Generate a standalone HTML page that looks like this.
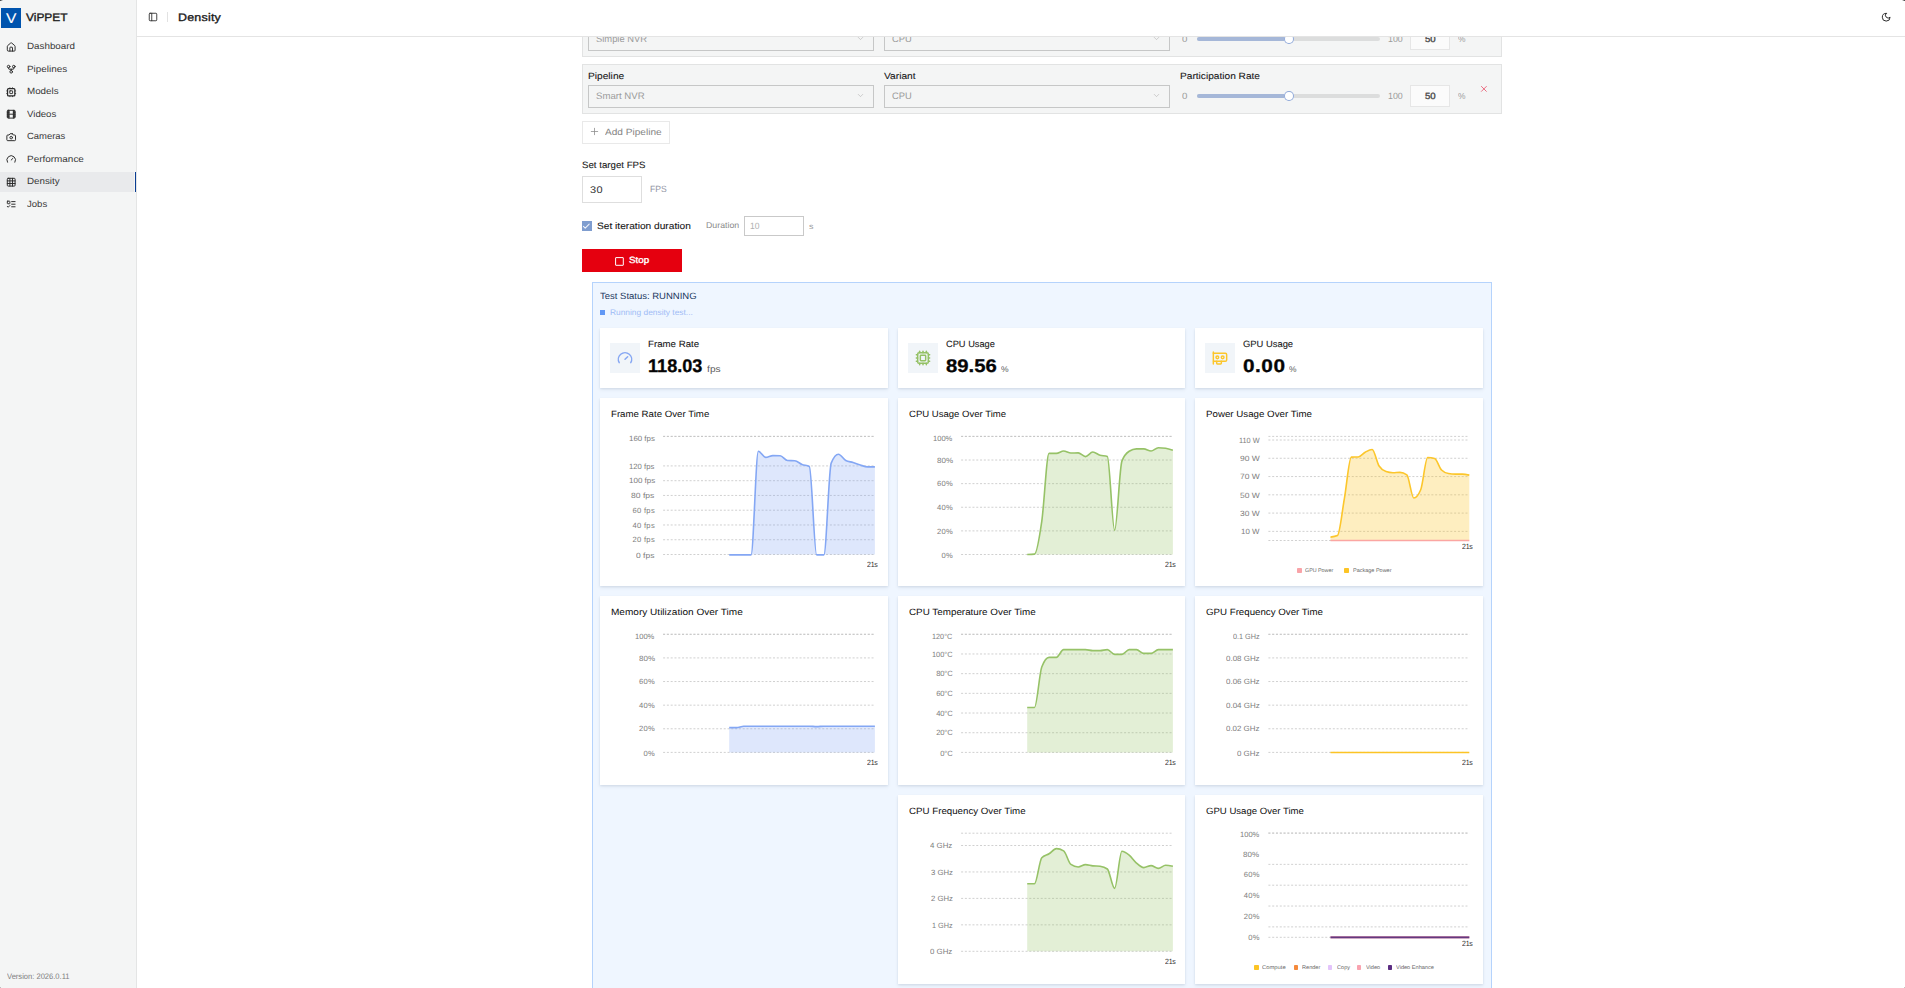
<!DOCTYPE html>
<html lang="en"><head><meta charset="utf-8"><title>ViPPET - Density</title><style>
html,body{margin:0;padding:0;background:#fff;}
body{width:1905px;height:988px;overflow:hidden;position:relative;font-family:"Liberation Sans",sans-serif;}
.b{position:absolute;box-sizing:border-box;}
.t{position:absolute;white-space:pre;line-height:1;transform-origin:0 0;text-rendering:geometricPrecision;font-family:"Liberation Sans",sans-serif;}
.i{position:absolute;overflow:visible;}
.c{position:absolute;overflow:visible;}
.c text{font-family:"Liberation Sans",sans-serif;}
</style></head><body>
<div class="b" style="left:0.00px;top:0.00px;width:136.00px;height:988.00px;background:#f4f5f5;z-index:20;"></div>
<div class="b" style="left:136.00px;top:0.00px;width:1.00px;height:988.00px;background:#e4e5e5;z-index:20;"></div>
<div class="b" style="left:1.00px;top:8.00px;width:20.00px;height:20.00px;background:#0054ae;z-index:21;"></div>
<span class="t" style="transform:scaleX(1.0983);left:5.70px;top:11px;line-height:16px;font-size:14.2px;color:#fff;-webkit-text-stroke:0.09px #fff;z-index:22;">V</span>
<span class="t" style="transform:scaleX(1.0858);left:26.10px;top:12px;line-height:12px;font-size:11px;color:#1a1a1a;-webkit-text-stroke:0.35px #1a1a1a;z-index:22;">ViPPET</span>
<div class="b" style="left:0.00px;top:172.00px;width:134.00px;height:20.00px;background:#e9eaec;z-index:21;"></div>
<div class="b" style="left:135.00px;top:172.00px;width:1.20px;height:20.00px;background:#0a3d92;z-index:21;"></div>
<svg class="i" style="left:5.75px;top:41.80px;color:#2a2a2a;z-index:22;" width="10.4" height="10.4" viewBox="0 0 24 24" fill="none" stroke="#2a2a2a" stroke-width="2.25" stroke-linecap="round" stroke-linejoin="round"><path d="M15 21v-8a1 1 0 0 0-1-1h-4a1 1 0 0 0-1 1v8"/><path d="M3 10a2 2 0 0 1 .709-1.528l7-5.999a2 2 0 0 1 2.582 0l7 5.999A2 2 0 0 1 21 10v9a2 2 0 0 1-2 2H5a2 2 0 0 1-2-2z"/></svg>
<span class="t" style="transform:scaleX(1.0901);left:26.60px;top:41px;line-height:10px;font-size:9.0px;color:#383838;z-index:22;">Dashboard</span>
<svg class="i" style="left:5.75px;top:64.30px;color:#2a2a2a;z-index:22;" width="10.4" height="10.4" viewBox="0 0 24 24" fill="none" stroke="#2a2a2a" stroke-width="2.25" stroke-linecap="round" stroke-linejoin="round"><circle cx="12" cy="18" r="3"/><circle cx="6" cy="6" r="3"/><circle cx="18" cy="6" r="3"/><path d="M18 9v2c0 .6-.4 1-1 1H7c-.6 0-1-.4-1-1V9"/><path d="M12 12v3"/></svg>
<span class="t" style="transform:scaleX(1.1004);left:26.60px;top:64px;line-height:10px;font-size:9.0px;color:#383838;z-index:22;">Pipelines</span>
<svg class="i" style="left:5.75px;top:86.80px;color:#2a2a2a;z-index:22;" width="10.4" height="10.4" viewBox="0 0 24 24" fill="none" stroke="#2a2a2a" stroke-width="2.25" stroke-linecap="round" stroke-linejoin="round"><rect width="16.8" height="16.8" x="3.6" y="3.6" rx="2.2" stroke-width="2.9"/><rect width="6.4" height="6.4" x="8.8" y="8.8" rx=".6" stroke-width="2.1"/><path d="M15 1.6v1M15 21.4v1M1.6 15h1M1.6 9h1M21.4 15h1M21.4 9h1M9 1.6v1M9 21.4v1" stroke-width="1.8"/></svg>
<span class="t" style="transform:scaleX(1.0891);left:26.60px;top:86px;line-height:10px;font-size:9.0px;color:#383838;z-index:22;">Models</span>
<svg class="i" style="left:5.75px;top:109.30px;color:#2a2a2a;z-index:22;" width="10.4" height="10.4" viewBox="0 0 24 24" fill="none" stroke="#2a2a2a" stroke-width="2.25" stroke-linecap="round" stroke-linejoin="round"><path d="M5 3h2v18H5a2 2 0 0 1-2-2V5a2 2 0 0 1 2-2zM19 3h-2v18h2a2 2 0 0 0 2-2V5a2 2 0 0 0-2-2z" fill="currentColor" fill-opacity=".75" stroke="none"/><rect width="18" height="18" x="3" y="3" rx="2"/><path d="M7 3v18"/><path d="M3 7.5h4"/><path d="M3 12h18"/><path d="M3 16.5h4"/><path d="M17 3v18"/><path d="M17 7.5h4"/><path d="M17 16.5h4"/></svg>
<span class="t" style="transform:scaleX(1.0709);left:26.60px;top:109px;line-height:10px;font-size:9.0px;color:#383838;z-index:22;">Videos</span>
<svg class="i" style="left:5.75px;top:131.80px;color:#2a2a2a;z-index:22;" width="10.4" height="10.4" viewBox="0 0 24 24" fill="none" stroke="#2a2a2a" stroke-width="2.25" stroke-linecap="round" stroke-linejoin="round"><path d="M14.5 4h-5L7 7H4a2 2 0 0 0-2 2v9a2 2 0 0 0 2 2h16a2 2 0 0 0 2-2V9a2 2 0 0 0-2-2h-3l-2.5-3z"/><circle cx="12" cy="13" r="3"/></svg>
<span class="t" style="transform:scaleX(1.0489);left:26.60px;top:131px;line-height:10px;font-size:9.0px;color:#383838;z-index:22;">Cameras</span>
<svg class="i" style="left:5.75px;top:154.30px;color:#2a2a2a;z-index:22;" width="10.4" height="10.4" viewBox="0 0 24 24" fill="none" stroke="#2a2a2a" stroke-width="2.25" stroke-linecap="round" stroke-linejoin="round"><path d="m12 14 4-4"/><path d="M3.34 19a10 10 0 1 1 17.32 0"/></svg>
<span class="t" style="transform:scaleX(1.1042);left:26.60px;top:154px;line-height:10px;font-size:9.0px;color:#383838;z-index:22;">Performance</span>
<svg class="i" style="left:5.75px;top:176.80px;color:#2a2a2a;z-index:22;" width="10.4" height="10.4" viewBox="0 0 24 24" fill="none" stroke="#2a2a2a" stroke-width="2.25" stroke-linecap="round" stroke-linejoin="round"><rect width="18" height="18" x="3" y="3" rx="2"/><path d="M3 9h18"/><path d="M3 15h18"/><path d="M9 3v18"/><path d="M15 3v18"/></svg>
<span class="t" style="transform:scaleX(1.0861);left:26.60px;top:176px;line-height:10px;font-size:9.0px;color:#383838;z-index:22;">Density</span>
<svg class="i" style="left:5.75px;top:199.30px;color:#2a2a2a;z-index:22;" width="10.4" height="10.4" viewBox="0 0 24 24" fill="none" stroke="#2a2a2a" stroke-width="2.25" stroke-linecap="round" stroke-linejoin="round"><rect x="3" y="5" width="6" height="6" rx="1"/><path d="m3 17 2 2 4-4"/><path d="M13 6h8"/><path d="M13 12h8"/><path d="M13 18h8"/></svg>
<span class="t" style="transform:scaleX(1.0623);left:26.60px;top:199px;line-height:10px;font-size:9.0px;color:#383838;z-index:22;">Jobs</span>
<span class="t" style="transform:scaleX(0.9452);left:7.10px;top:972px;line-height:9px;font-size:8.0px;color:#7d7d7d;z-index:22;">Version: 2026.0.11</span>
<div class="b" style="left:137.00px;top:0.00px;width:1768.00px;height:36.00px;background:#fff;z-index:10;"></div>
<div class="b" style="left:137.00px;top:36.00px;width:1768.00px;height:1.00px;background:#e4e4e4;z-index:10;"></div>
<svg class="i" style="left:148.05px;top:11.85px;color:#2a2a2a;z-index:11;" width="10.0" height="10.0" viewBox="0 0 24 24" fill="none" stroke="#2a2a2a" stroke-width="2.1" stroke-linecap="round" stroke-linejoin="round"><rect width="18" height="18" x="3" y="3" rx="2"/><path d="M9 3v18"/></svg>
<div class="b" style="left:167.00px;top:12.00px;width:1.00px;height:10.00px;background:#e2e2e2;z-index:11;"></div>
<span class="t" style="transform:scaleX(1.1300);left:178.30px;top:12px;line-height:12px;font-size:11px;color:#1a1a1a;-webkit-text-stroke:0.35px #1a1a1a;letter-spacing:0.198px;z-index:11;">Density</span>
<svg class="i" style="left:1880.80px;top:11.80px;color:#2a2a2a;z-index:11;" width="10.4" height="10.4" viewBox="0 0 24 24" fill="none" stroke="#2a2a2a" stroke-width="2.3" stroke-linecap="round" stroke-linejoin="round"><path d="M12 3a6 6 0 0 0 9 9 9 9 0 1 1-9-9Z"/></svg>
<div class="b" style="left:0.00px;top:987.00px;width:1.00px;height:1.00px;background:#bdbdbd;z-index:30;"></div>
<div class="b" style="left:1904.00px;top:987.00px;width:1.00px;height:1.00px;background:#c8c8c8;z-index:30;"></div>
<div class="b" style="left:0;top:0;width:0;height:0;border-top:1.7px solid #2a2a2a;border-right:3px solid transparent;z-index:30"></div>
<div class="b" style="left:1902px;top:0;width:0;height:0;border-top:1.7px solid #2a2a2a;border-left:3px solid transparent;z-index:30"></div>
<div class="b" style="left:582.00px;top:7.00px;width:920.00px;height:50.00px;background:#f4f5f5;box-shadow:inset 0 0 0 1px #e2e3e3;"></div>
<span class="t" style="transform:scaleX(1.1187);left:587.70px;top:14px;line-height:10px;font-size:9.1px;color:#171717;-webkit-text-stroke:0.09px #171717;">Pipeline</span>
<span class="t" style="transform:scaleX(1.1229);left:883.80px;top:14px;line-height:10px;font-size:9.1px;color:#171717;-webkit-text-stroke:0.09px #171717;">Variant</span>
<span class="t" style="transform:scaleX(1.1145);left:1179.50px;top:14px;line-height:10px;font-size:9.1px;color:#171717;-webkit-text-stroke:0.09px #171717;">Participation Rate</span>
<div class="b" style="left:588.00px;top:28.00px;width:286.00px;height:23.00px;box-shadow:inset 0 0 0 1px #c6c7c7;"></div>
<span class="t" style="left:596.00px;top:33px;line-height:11px;font-size:9.4px;color:#9b9b9b;">Simple NVR</span>
<svg class="i" style="left:855.50px;top:34.40px;color:#b2b2b2;" width="9.0" height="9.0" viewBox="0 0 24 24" fill="none" stroke="#b2b2b2" stroke-width="1.6" stroke-linecap="round" stroke-linejoin="round"><path d="m6 9 6 6 6-6"/></svg>
<div class="b" style="left:884.00px;top:28.00px;width:286.00px;height:23.00px;box-shadow:inset 0 0 0 1px #c6c7c7;"></div>
<span class="t" style="transform:scaleX(0.9951);left:891.90px;top:33px;line-height:11px;font-size:9.4px;color:#9b9b9b;">CPU</span>
<svg class="i" style="left:1151.50px;top:34.40px;color:#b2b2b2;" width="9.0" height="9.0" viewBox="0 0 24 24" fill="none" stroke="#b2b2b2" stroke-width="1.6" stroke-linecap="round" stroke-linejoin="round"><path d="m6 9 6 6 6-6"/></svg>
<span class="t" style="transform:scaleX(1.0766);left:1181.80px;top:34px;line-height:10px;font-size:9.0px;color:#9b9b9b;">0</span>
<div class="b" style="left:1197.00px;top:37.20px;width:183.00px;height:3.80px;background:#dcdddd;border-radius:2px;"></div>
<div class="b" style="left:1197.00px;top:37.20px;width:92.00px;height:3.80px;background:#a5b7d8;border-radius:2px;"></div>
<div class="b" style="left:1284.10px;top:34.20px;width:9.8px;height:9.8px;border-radius:50%;background:#fff;box-shadow:inset 0 0 0 1px #8fa8d8;"></div>
<span class="t" style="transform:scaleX(0.9846);left:1388.00px;top:34px;line-height:10px;font-size:9.0px;color:#9b9b9b;">100</span>
<div class="b" style="left:1410.00px;top:28.00px;width:40.00px;height:22.00px;background:#fbfbfb;box-shadow:inset 0 0 0 1px #e6e6e6;"></div>
<span class="t" style="transform:scaleX(1.0683);left:1425.10px;top:34px;line-height:10px;font-size:9.0px;color:#4a4a4a;-webkit-text-stroke:0.35px #4a4a4a;">50</span>
<span class="t" style="transform:scaleX(0.9796);left:1458.10px;top:34px;line-height:10px;font-size:8.6px;color:#9b9b9b;">%</span>
<div class="b" style="left:582.00px;top:64.00px;width:920.00px;height:50.00px;background:#f4f5f5;box-shadow:inset 0 0 0 1px #e2e3e3;"></div>
<span class="t" style="transform:scaleX(1.1187);left:587.70px;top:71px;line-height:10px;font-size:9.1px;color:#171717;-webkit-text-stroke:0.09px #171717;">Pipeline</span>
<span class="t" style="transform:scaleX(1.1229);left:883.80px;top:71px;line-height:10px;font-size:9.1px;color:#171717;-webkit-text-stroke:0.09px #171717;">Variant</span>
<span class="t" style="transform:scaleX(1.1145);left:1179.50px;top:71px;line-height:10px;font-size:9.1px;color:#171717;-webkit-text-stroke:0.09px #171717;">Participation Rate</span>
<div class="b" style="left:588.00px;top:85.00px;width:286.00px;height:23.00px;box-shadow:inset 0 0 0 1px #c6c7c7;"></div>
<span class="t" style="transform:scaleX(1.0252);left:596.00px;top:90px;line-height:11px;font-size:9.4px;color:#9b9b9b;">Smart NVR</span>
<svg class="i" style="left:855.50px;top:91.40px;color:#b2b2b2;" width="9.0" height="9.0" viewBox="0 0 24 24" fill="none" stroke="#b2b2b2" stroke-width="1.6" stroke-linecap="round" stroke-linejoin="round"><path d="m6 9 6 6 6-6"/></svg>
<div class="b" style="left:884.00px;top:85.00px;width:286.00px;height:23.00px;box-shadow:inset 0 0 0 1px #c6c7c7;"></div>
<span class="t" style="transform:scaleX(0.9951);left:891.90px;top:90px;line-height:11px;font-size:9.4px;color:#9b9b9b;">CPU</span>
<svg class="i" style="left:1151.50px;top:91.40px;color:#b2b2b2;" width="9.0" height="9.0" viewBox="0 0 24 24" fill="none" stroke="#b2b2b2" stroke-width="1.6" stroke-linecap="round" stroke-linejoin="round"><path d="m6 9 6 6 6-6"/></svg>
<span class="t" style="transform:scaleX(1.0766);left:1181.80px;top:91px;line-height:10px;font-size:9.0px;color:#9b9b9b;">0</span>
<div class="b" style="left:1197.00px;top:94.20px;width:183.00px;height:3.80px;background:#dcdddd;border-radius:2px;"></div>
<div class="b" style="left:1197.00px;top:94.20px;width:92.00px;height:3.80px;background:#a5b7d8;border-radius:2px;"></div>
<div class="b" style="left:1284.10px;top:91.20px;width:9.8px;height:9.8px;border-radius:50%;background:#fff;box-shadow:inset 0 0 0 1px #8fa8d8;"></div>
<span class="t" style="transform:scaleX(0.9846);left:1388.00px;top:91px;line-height:10px;font-size:9.0px;color:#9b9b9b;">100</span>
<div class="b" style="left:1410.00px;top:85.00px;width:40.00px;height:22.00px;background:#fbfbfb;box-shadow:inset 0 0 0 1px #e6e6e6;"></div>
<span class="t" style="transform:scaleX(1.0683);left:1425.10px;top:91px;line-height:10px;font-size:9.0px;color:#4a4a4a;-webkit-text-stroke:0.35px #4a4a4a;">50</span>
<span class="t" style="transform:scaleX(0.9796);left:1458.10px;top:91px;line-height:10px;font-size:8.6px;color:#9b9b9b;">%</span>
<svg class="i" style="left:1479.10px;top:84.20px;color:#e8506a;" width="9.8" height="9.8" viewBox="0 0 24 24" fill="none" stroke="#e8506a" stroke-width="2.0" stroke-linecap="round" stroke-linejoin="round"><path d="M18 6 6 18"/><path d="m6 6 12 12"/></svg>
<div class="b" style="left:582.00px;top:121.00px;width:88.00px;height:23.00px;background:#fff;box-shadow:inset 0 0 0 1px #e9e9e9;"></div>
<svg class="i" style="left:589.40px;top:126.40px;color:#8c8c8c;" width="11.0" height="11.0" viewBox="0 0 24 24" fill="none" stroke="#8c8c8c" stroke-width="1.7" stroke-linecap="round" stroke-linejoin="round"><path d="M5 12h14"/><path d="M12 5v14"/></svg>
<span class="t" style="transform:scaleX(1.1198);left:605.00px;top:127px;line-height:10px;font-size:9.0px;color:#858585;">Add Pipeline</span>
<span class="t" style="transform:scaleX(1.0644);left:581.70px;top:160px;line-height:10px;font-size:9.1px;color:#171717;-webkit-text-stroke:0.09px #171717;">Set target FPS</span>
<div class="b" style="left:582.00px;top:176.00px;width:60.00px;height:27.00px;background:#fff;box-shadow:inset 0 0 0 1px #dedede;"></div>
<span class="t" style="transform:scaleX(1.1300);left:589.80px;top:185px;line-height:11px;font-size:9.7px;color:#333;letter-spacing:0.281px;">30</span>
<span class="t" style="transform:scaleX(0.9534);left:649.50px;top:184px;line-height:10px;font-size:9.0px;color:#8f93a3;">FPS</span>
<div class="b" style="left:581.90px;top:221.00px;width:10.10px;height:9.90px;background:#7f9dcf;"></div>
<svg class="i" style="left:582.40px;top:222.00px;color:#f2f5fb;" width="8.6" height="8.6" viewBox="0 0 24 24" fill="none" stroke="#f2f5fb" stroke-width="2.9" stroke-linecap="round" stroke-linejoin="round"><path d="M20 6 9 17l-5-5"/></svg>
<span class="t" style="transform:scaleX(1.0933);left:596.80px;top:221px;line-height:10px;font-size:9.3px;color:#171717;-webkit-text-stroke:0.09px #171717;">Set iteration duration</span>
<span class="t" style="transform:scaleX(1.0488);left:706.00px;top:220px;line-height:10px;font-size:8.4px;color:#8a8a8a;">Duration</span>
<div class="b" style="left:744.00px;top:216.00px;width:60.00px;height:20.00px;background:#fff;box-shadow:inset 0 0 0 1px #c9c9c9;"></div>
<span class="t" style="transform:scaleX(0.9485);left:749.90px;top:221px;line-height:10px;font-size:9.0px;color:#b0b0b0;">10</span>
<span class="t" style="transform:scaleX(1.1250);left:808.70px;top:222px;line-height:9px;font-size:8.0px;color:#9c9c9c;">s</span>
<div class="b" style="left:581.90px;top:249.00px;width:100.20px;height:22.80px;background:#e5000f;"></div>
<svg class="i" style="left:614.6px;top:256.6px" width="9" height="9" viewBox="0 0 9 9" fill="none" stroke="#fff" stroke-width="1"><rect x=".6" y=".6" width="7.7" height="7.7" rx=".25"/></svg>
<span class="t" style="transform:scaleX(1.0684);left:628.90px;top:255px;line-height:10px;font-size:9.2px;color:#fff;-webkit-text-stroke:0.35px #fff;">Stop</span>
<div class="b" style="left:592.00px;top:282.00px;width:900.00px;height:718.00px;background:#eff6ff;box-shadow:inset 0 0 0 1px #b5d3fc;"></div>
<span class="t" style="transform:scaleX(1.0445);left:600.20px;top:291px;line-height:10px;font-size:9.1px;color:#22365e;">Test Status: RUNNING</span>
<div class="b" style="left:600.00px;top:309.90px;width:4.90px;height:4.95px;background:#6198f5;"></div>
<span class="t" style="transform:scaleX(1.0338);left:610.30px;top:308px;line-height:9px;font-size:8.1px;color:#9fbcf6;">Running density test...</span>
<div class="b" style="left:600.00px;top:328.00px;width:288.00px;height:60.00px;background:#fff;box-shadow:0 1px 2px rgba(30,50,90,.10),0 2px 4px rgba(30,50,90,.06);"></div>
<div class="b" style="left:610.20px;top:343.10px;width:29.70px;height:29.70px;background:#f1f5f9;"></div>
<svg class="i" style="left:617.20px;top:349.60px;color:#86a7f3;" width="16" height="16" viewBox="0 0 24 24" fill="none" stroke="#86a7f3" stroke-width="2.2" stroke-linecap="round" stroke-linejoin="round"><path d="m12 14 4-4"/><path d="M3.34 19a10 10 0 1 1 17.32 0"/></svg>
<span class="t" style="transform:scaleX(1.0642);left:647.90px;top:339px;line-height:10px;font-size:9.1px;color:#171717;-webkit-text-stroke:0.09px #171717;">Frame Rate</span>
<span class="t" style="transform:scaleX(0.9849);left:647.90px;top:355px;line-height:21px;font-size:18.4px;color:#050505;font-weight:700;-webkit-text-stroke:0.3px #050505;">118.03</span>
<span class="t" style="transform:scaleX(1.1300);left:706.80px;top:364px;line-height:10px;font-size:9.0px;color:#5a5a5a;letter-spacing:0.054px;">fps</span>
<div class="b" style="left:898.00px;top:328.00px;width:287.00px;height:60.00px;background:#fff;box-shadow:0 1px 2px rgba(30,50,90,.10),0 2px 4px rgba(30,50,90,.06);"></div>
<div class="b" style="left:908.20px;top:343.10px;width:29.70px;height:29.70px;background:#f1f5f9;"></div>
<svg class="i" style="left:915.20px;top:349.60px;color:#94c165;" width="16" height="16" viewBox="0 0 24 24" fill="none" stroke="#94c165" stroke-width="2.2" stroke-linecap="round" stroke-linejoin="round"><path d="M12 20v2"/><path d="M12 2v2"/><path d="M17 20v2"/><path d="M17 2v2"/><path d="M2 12h2"/><path d="M2 17h2"/><path d="M2 7h2"/><path d="M20 12h2"/><path d="M20 17h2"/><path d="M20 7h2"/><path d="M7 20v2"/><path d="M7 2v2"/><rect x="4" y="4" width="16" height="16" rx="2"/><rect x="8" y="8" width="8" height="8" rx="1"/></svg>
<span class="t" style="transform:scaleX(1.0184);left:945.90px;top:339px;line-height:10px;font-size:9.1px;color:#171717;-webkit-text-stroke:0.09px #171717;">CPU Usage</span>
<span class="t" style="transform:scaleX(1.1036);left:945.90px;top:355px;line-height:21px;font-size:18.4px;color:#050505;font-weight:700;-webkit-text-stroke:0.3px #050505;">89.56</span>
<span class="t" style="transform:scaleX(1.0438);left:1001.10px;top:365px;line-height:9px;font-size:8.2px;color:#5a5a5a;">%</span>
<div class="b" style="left:1195.00px;top:328.00px;width:288.00px;height:60.00px;background:#fff;box-shadow:0 1px 2px rgba(30,50,90,.10),0 2px 4px rgba(30,50,90,.06);"></div>
<div class="b" style="left:1205.20px;top:343.10px;width:29.70px;height:29.70px;background:#f1f5f9;"></div>
<svg class="i" style="left:1212.20px;top:349.60px;color:#fcc62b;" width="16" height="16" viewBox="0 0 24 24" fill="none" stroke="#fcc62b" stroke-width="2.2" stroke-linecap="round" stroke-linejoin="round"><path d="M2 21V3"/><path d="M2 5h18a2 2 0 0 1 2 2v8a2 2 0 0 1-2 2H2.26"/><path d="M7 17v3a1 1 0 0 0 1 1h5a1 1 0 0 0 1-1v-3"/><circle cx="16" cy="11" r="2"/><circle cx="8" cy="11" r="2"/></svg>
<span class="t" style="transform:scaleX(1.0323);left:1242.90px;top:339px;line-height:10px;font-size:9.1px;color:#171717;-webkit-text-stroke:0.09px #171717;">GPU Usage</span>
<span class="t" style="transform:scaleX(1.1300);left:1242.90px;top:355px;line-height:21px;font-size:18.4px;color:#050505;font-weight:700;-webkit-text-stroke:0.3px #050505;letter-spacing:0.457px;">0.00</span>
<span class="t" style="transform:scaleX(1.0300);left:1289.30px;top:365px;line-height:9px;font-size:8.2px;color:#5a5a5a;">%</span>
<div class="b" style="left:600.00px;top:398.00px;width:288.00px;height:188.00px;background:#fff;box-shadow:0 1px 2px rgba(30,50,90,.10),0 2px 4px rgba(30,50,90,.06);"></div>
<span class="t" style="transform:scaleX(1.0629);left:610.80px;top:409px;line-height:10px;font-size:9.1px;color:#0e0e0e;">Frame Rate Over Time</span>
<span class="t" style="transform:scaleX(1.1173);left:636.30px;top:551px;line-height:9px;font-size:7.6px;color:#7d7d7d;">0 fps</span>
<span class="t" style="right:1250.00px;top:535px;line-height:9px;font-size:7.6px;color:#7d7d7d;letter-spacing:0.300px;">20 fps</span>
<span class="t" style="right:1250.00px;top:521px;line-height:9px;font-size:7.6px;color:#7d7d7d;letter-spacing:0.300px;">40 fps</span>
<span class="t" style="right:1250.00px;top:506px;line-height:9px;font-size:7.6px;color:#7d7d7d;letter-spacing:0.300px;">60 fps</span>
<span class="t" style="transform:scaleX(1.1263);left:631.40px;top:491px;line-height:9px;font-size:7.6px;color:#7d7d7d;">80 fps</span>
<span class="t" style="transform:scaleX(1.0513);left:628.50px;top:476px;line-height:9px;font-size:7.6px;color:#7d7d7d;">100 fps</span>
<span class="t" style="transform:scaleX(1.0152);left:629.40px;top:462px;line-height:9px;font-size:7.6px;color:#7d7d7d;">120 fps</span>
<span class="t" style="transform:scaleX(1.0392);left:628.80px;top:434px;line-height:9px;font-size:7.6px;color:#7d7d7d;">160 fps</span>
<span class="t" style="transform:scaleX(0.9200);left:867.00px;top:560px;line-height:9px;font-size:7.6px;color:#2e2e2e;letter-spacing:-0.255px;">21s</span>
<div class="b" style="left:898.00px;top:398.00px;width:287.00px;height:188.00px;background:#fff;box-shadow:0 1px 2px rgba(30,50,90,.10),0 2px 4px rgba(30,50,90,.06);"></div>
<span class="t" style="transform:scaleX(1.0499);left:908.80px;top:409px;line-height:10px;font-size:9.1px;color:#0e0e0e;">CPU Usage Over Time</span>
<span class="t" style="right:952.05px;top:551px;line-height:9px;font-size:7.6px;color:#7d7d7d;letter-spacing:0.250px;">0%</span>
<span class="t" style="right:952.05px;top:527px;line-height:9px;font-size:7.6px;color:#7d7d7d;letter-spacing:0.250px;">20%</span>
<span class="t" style="right:952.05px;top:503px;line-height:9px;font-size:7.6px;color:#7d7d7d;letter-spacing:0.250px;">40%</span>
<span class="t" style="right:952.05px;top:479px;line-height:9px;font-size:7.6px;color:#7d7d7d;letter-spacing:0.250px;">60%</span>
<span class="t" style="transform:scaleX(1.0524);left:936.70px;top:456px;line-height:9px;font-size:7.6px;color:#7d7d7d;">80%</span>
<span class="t" style="transform:scaleX(0.9929);left:933.40px;top:434px;line-height:9px;font-size:7.6px;color:#7d7d7d;">100%</span>
<span class="t" style="transform:scaleX(0.9200);left:1165.00px;top:560px;line-height:9px;font-size:7.6px;color:#2e2e2e;letter-spacing:-0.255px;">21s</span>
<div class="b" style="left:1195.00px;top:398.00px;width:288.00px;height:188.00px;background:#fff;box-shadow:0 1px 2px rgba(30,50,90,.10),0 2px 4px rgba(30,50,90,.06);"></div>
<span class="t" style="transform:scaleX(1.0700);left:1205.80px;top:409px;line-height:10px;font-size:9.1px;color:#0e0e0e;">Power Usage Over Time</span>
<span class="t" style="transform:scaleX(0.9630);left:1238.80px;top:436px;line-height:9px;font-size:7.6px;color:#7d7d7d;">110 W</span>
<span class="t" style="transform:scaleX(1.1165);left:1239.60px;top:454px;line-height:9px;font-size:7.6px;color:#7d7d7d;">90 W</span>
<span class="t" style="transform:scaleX(1.1165);left:1239.60px;top:472px;line-height:9px;font-size:7.6px;color:#7d7d7d;">70 W</span>
<span class="t" style="transform:scaleX(1.1165);left:1239.60px;top:491px;line-height:9px;font-size:7.6px;color:#7d7d7d;">50 W</span>
<span class="t" style="transform:scaleX(1.1052);left:1239.80px;top:509px;line-height:9px;font-size:7.6px;color:#7d7d7d;">30 W</span>
<span class="t" style="transform:scaleX(1.0375);left:1241.00px;top:527px;line-height:9px;font-size:7.6px;color:#7d7d7d;">10 W</span>
<span class="t" style="transform:scaleX(0.9200);left:1462.00px;top:542px;line-height:9px;font-size:7.6px;color:#2e2e2e;letter-spacing:-0.255px;">21s</span>
<div class="b" style="left:1296.90px;top:568.00px;width:4.80px;height:4.80px;background:#f9a3a8;border-radius:.8px;"></div>
<span class="t" style="transform:scaleX(0.9906);left:1305.20px;top:568px;line-height:6px;font-size:5.4px;color:#666;">GPU Power</span>
<div class="b" style="left:1343.80px;top:568.00px;width:4.80px;height:4.80px;background:#fcc425;border-radius:.8px;"></div>
<span class="t" style="transform:scaleX(1.0194);left:1352.50px;top:568px;line-height:6px;font-size:5.4px;color:#666;">Package Power</span>
<div class="b" style="left:600.00px;top:596.00px;width:288.00px;height:189.00px;background:#fff;box-shadow:0 1px 2px rgba(30,50,90,.10),0 2px 4px rgba(30,50,90,.06);"></div>
<span class="t" style="transform:scaleX(1.1051);left:610.80px;top:607px;line-height:10px;font-size:9.1px;color:#0e0e0e;">Memory Utilization Over Time</span>
<span class="t" style="right:1250.05px;top:749px;line-height:9px;font-size:7.6px;color:#7d7d7d;letter-spacing:0.250px;">0%</span>
<span class="t" style="right:1250.05px;top:724px;line-height:9px;font-size:7.6px;color:#7d7d7d;letter-spacing:0.250px;">20%</span>
<span class="t" style="right:1250.05px;top:701px;line-height:9px;font-size:7.6px;color:#7d7d7d;letter-spacing:0.250px;">40%</span>
<span class="t" style="right:1250.05px;top:677px;line-height:9px;font-size:7.6px;color:#7d7d7d;letter-spacing:0.250px;">60%</span>
<span class="t" style="transform:scaleX(1.0524);left:638.70px;top:654px;line-height:9px;font-size:7.6px;color:#7d7d7d;">80%</span>
<span class="t" style="transform:scaleX(0.9929);left:635.40px;top:632px;line-height:9px;font-size:7.6px;color:#7d7d7d;">100%</span>
<span class="t" style="transform:scaleX(0.9200);left:867.00px;top:758px;line-height:9px;font-size:7.6px;color:#2e2e2e;letter-spacing:-0.255px;">21s</span>
<div class="b" style="left:898.00px;top:596.00px;width:287.00px;height:189.00px;background:#fff;box-shadow:0 1px 2px rgba(30,50,90,.10),0 2px 4px rgba(30,50,90,.06);"></div>
<span class="t" style="transform:scaleX(1.0822);left:908.80px;top:607px;line-height:10px;font-size:9.1px;color:#0e0e0e;">CPU Temperature Over Time</span>
<span class="t" style="right:952.45px;top:749px;line-height:9px;font-size:7.6px;color:#7d7d7d;letter-spacing:-0.150px;">0°C</span>
<span class="t" style="right:952.45px;top:728px;line-height:9px;font-size:7.6px;color:#7d7d7d;letter-spacing:-0.150px;">20°C</span>
<span class="t" style="right:952.45px;top:709px;line-height:9px;font-size:7.6px;color:#7d7d7d;letter-spacing:-0.150px;">40°C</span>
<span class="t" style="right:952.45px;top:689px;line-height:9px;font-size:7.6px;color:#7d7d7d;letter-spacing:-0.150px;">60°C</span>
<span class="t" style="right:952.45px;top:669px;line-height:9px;font-size:7.6px;color:#7d7d7d;letter-spacing:-0.150px;">80°C</span>
<span class="t" style="transform:scaleX(0.9716);left:932.10px;top:650px;line-height:9px;font-size:7.6px;color:#7d7d7d;">100°C</span>
<span class="t" style="transform:scaleX(0.9574);left:932.40px;top:632px;line-height:9px;font-size:7.6px;color:#7d7d7d;">120°C</span>
<span class="t" style="transform:scaleX(0.9200);left:1165.00px;top:758px;line-height:9px;font-size:7.6px;color:#2e2e2e;letter-spacing:-0.255px;">21s</span>
<div class="b" style="left:1195.00px;top:596.00px;width:288.00px;height:189.00px;background:#fff;box-shadow:0 1px 2px rgba(30,50,90,.10),0 2px 4px rgba(30,50,90,.06);"></div>
<span class="t" style="transform:scaleX(1.0668);left:1205.80px;top:607px;line-height:10px;font-size:9.1px;color:#0e0e0e;">GPU Frequency Over Time</span>
<span class="t" style="transform:scaleX(1.0450);left:1236.90px;top:749px;line-height:9px;font-size:7.6px;color:#7d7d7d;">0 GHz</span>
<span class="t" style="transform:scaleX(1.0412);left:1226.00px;top:724px;line-height:9px;font-size:7.6px;color:#7d7d7d;">0.02 GHz</span>
<span class="t" style="transform:scaleX(1.0537);left:1225.60px;top:701px;line-height:9px;font-size:7.6px;color:#7d7d7d;">0.04 GHz</span>
<span class="t" style="transform:scaleX(1.0474);left:1225.80px;top:677px;line-height:9px;font-size:7.6px;color:#7d7d7d;">0.06 GHz</span>
<span class="t" style="transform:scaleX(1.0474);left:1225.80px;top:654px;line-height:9px;font-size:7.6px;color:#7d7d7d;">0.08 GHz</span>
<span class="t" style="transform:scaleX(0.9548);left:1232.80px;top:632px;line-height:9px;font-size:7.6px;color:#7d7d7d;">0.1 GHz</span>
<span class="t" style="transform:scaleX(0.9200);left:1462.00px;top:758px;line-height:9px;font-size:7.6px;color:#2e2e2e;letter-spacing:-0.255px;">21s</span>
<div class="b" style="left:898.00px;top:795.00px;width:287.00px;height:189.00px;background:#fff;box-shadow:0 1px 2px rgba(30,50,90,.10),0 2px 4px rgba(30,50,90,.06);"></div>
<span class="t" style="transform:scaleX(1.0682);left:908.80px;top:806px;line-height:10px;font-size:9.1px;color:#0e0e0e;">CPU Frequency Over Time</span>
<span class="t" style="transform:scaleX(1.0357);left:930.40px;top:947px;line-height:9px;font-size:7.6px;color:#7d7d7d;">0 GHz</span>
<span class="t" style="transform:scaleX(0.9567);left:932.10px;top:921px;line-height:9px;font-size:7.6px;color:#7d7d7d;">1 GHz</span>
<span class="t" style="transform:scaleX(1.0171);left:930.80px;top:894px;line-height:9px;font-size:7.6px;color:#7d7d7d;">2 GHz</span>
<span class="t" style="transform:scaleX(1.0171);left:930.80px;top:868px;line-height:9px;font-size:7.6px;color:#7d7d7d;">3 GHz</span>
<span class="t" style="transform:scaleX(1.0357);left:930.40px;top:841px;line-height:9px;font-size:7.6px;color:#7d7d7d;">4 GHz</span>
<span class="t" style="transform:scaleX(0.9200);left:1165.00px;top:957px;line-height:9px;font-size:7.6px;color:#2e2e2e;letter-spacing:-0.255px;">21s</span>
<div class="b" style="left:1195.00px;top:795.00px;width:288.00px;height:189.00px;background:#fff;box-shadow:0 1px 2px rgba(30,50,90,.10),0 2px 4px rgba(30,50,90,.06);"></div>
<span class="t" style="transform:scaleX(1.0529);left:1205.80px;top:806px;line-height:10px;font-size:9.1px;color:#0e0e0e;">GPU Usage Over Time</span>
<span class="t" style="right:645.35px;top:933px;line-height:9px;font-size:7.6px;color:#7d7d7d;letter-spacing:0.250px;">0%</span>
<span class="t" style="right:645.35px;top:912px;line-height:9px;font-size:7.6px;color:#7d7d7d;letter-spacing:0.250px;">20%</span>
<span class="t" style="right:645.35px;top:891px;line-height:9px;font-size:7.6px;color:#7d7d7d;letter-spacing:0.250px;">40%</span>
<span class="t" style="right:645.35px;top:870px;line-height:9px;font-size:7.6px;color:#7d7d7d;letter-spacing:0.250px;">60%</span>
<span class="t" style="transform:scaleX(1.0524);left:1243.40px;top:850px;line-height:9px;font-size:7.6px;color:#7d7d7d;">80%</span>
<span class="t" style="transform:scaleX(0.9929);left:1240.10px;top:830px;line-height:9px;font-size:7.6px;color:#7d7d7d;">100%</span>
<span class="t" style="transform:scaleX(0.9200);left:1462.00px;top:939px;line-height:9px;font-size:7.6px;color:#2e2e2e;letter-spacing:-0.255px;">21s</span>
<div class="b" style="left:1253.80px;top:964.80px;width:4.80px;height:4.80px;background:#fcc425;border-radius:.8px;"></div>
<span class="t" style="transform:scaleX(1.0834);left:1262.30px;top:965px;line-height:6px;font-size:5.4px;color:#666;">Compute</span>
<div class="b" style="left:1293.70px;top:964.80px;width:4.80px;height:4.80px;background:#f58a3c;border-radius:.8px;"></div>
<span class="t" style="transform:scaleX(1.0346);left:1302.20px;top:965px;line-height:6px;font-size:5.4px;color:#666;">Render</span>
<div class="b" style="left:1327.70px;top:964.80px;width:4.80px;height:4.80px;background:#e3c4fb;border-radius:.8px;"></div>
<span class="t" style="transform:scaleX(1.0402);left:1336.50px;top:965px;line-height:6px;font-size:5.4px;color:#666;">Copy</span>
<div class="b" style="left:1356.70px;top:964.80px;width:4.80px;height:4.80px;background:#f9a3b0;border-radius:.8px;"></div>
<span class="t" style="transform:scaleX(1.0363);left:1365.50px;top:965px;line-height:6px;font-size:5.4px;color:#666;">Video</span>
<div class="b" style="left:1387.70px;top:964.80px;width:4.80px;height:4.80px;background:#5b2d82;border-radius:.8px;"></div>
<span class="t" style="transform:scaleX(1.0392);left:1396.10px;top:965px;line-height:6px;font-size:5.4px;color:#666;">Video Enhance</span>
<svg class="c" style="left:0;top:0" width="1905" height="988" viewBox="0 0 1905 988"><line x1="663.10" y1="554.50" x2="874.90" y2="554.50" stroke="#c0c0c0" stroke-width="0.75" stroke-dasharray="2 1.79"/><line x1="663.10" y1="539.74" x2="874.90" y2="539.74" stroke="#c0c0c0" stroke-width="0.75" stroke-dasharray="2 1.79"/><line x1="663.10" y1="524.98" x2="874.90" y2="524.98" stroke="#c0c0c0" stroke-width="0.75" stroke-dasharray="2 1.79"/><line x1="663.10" y1="510.21" x2="874.90" y2="510.21" stroke="#c0c0c0" stroke-width="0.75" stroke-dasharray="2 1.79"/><line x1="663.10" y1="495.45" x2="874.90" y2="495.45" stroke="#c0c0c0" stroke-width="0.75" stroke-dasharray="2 1.79"/><line x1="663.10" y1="480.69" x2="874.90" y2="480.69" stroke="#c0c0c0" stroke-width="0.75" stroke-dasharray="2 1.79"/><line x1="663.10" y1="465.92" x2="874.90" y2="465.92" stroke="#c0c0c0" stroke-width="0.75" stroke-dasharray="2 1.79"/><line x1="663.10" y1="436.40" x2="874.90" y2="436.40" stroke="#c0c0c0" stroke-width="0.75" stroke-dasharray="2 1.79"/><line x1="663.10" y1="436.40" x2="874.90" y2="436.40" stroke="#c0c0c0" stroke-width="0.75" stroke-dasharray="2 1.79"/><path d="M729.20,554.87C731.63,554.87,734.06,554.87,736.49,554.87C738.91,554.87,741.34,554.87,743.77,554.87C746.20,554.87,748.63,554.87,751.06,554.87C753.48,554.87,755.91,451.25,758.34,451.25C760.77,451.25,763.20,457.37,765.62,457.37C768.05,457.37,770.48,455.59,772.91,455.59C775.34,455.59,777.77,455.66,780.20,455.79C782.62,455.92,785.05,460.39,787.48,460.53C789.91,460.66,792.34,460.59,794.76,460.72C797.19,460.85,799.62,463.52,802.05,464.47C804.48,465.43,806.91,465.13,809.34,466.45C811.76,467.76,814.19,554.87,816.62,554.87C819.05,554.87,821.48,554.87,823.90,554.87C826.33,554.87,828.76,469.01,831.19,463.09C833.62,457.17,836.05,454.21,838.48,454.21C840.90,454.21,843.33,459.21,845.76,460.53C848.19,461.84,850.62,461.74,853.04,462.50C855.47,463.26,857.90,464.34,860.33,465.07C862.76,465.79,865.19,466.84,867.62,466.84C870.04,466.84,872.47,466.84,874.90,466.84L874.90,554.50L729.20,554.50Z" fill="#7fa3f3" fill-opacity="0.26" stroke="none"/><path d="M729.20,554.87C731.63,554.87,734.06,554.87,736.49,554.87C738.91,554.87,741.34,554.87,743.77,554.87C746.20,554.87,748.63,554.87,751.06,554.87C753.48,554.87,755.91,451.25,758.34,451.25C760.77,451.25,763.20,457.37,765.62,457.37C768.05,457.37,770.48,455.59,772.91,455.59C775.34,455.59,777.77,455.66,780.20,455.79C782.62,455.92,785.05,460.39,787.48,460.53C789.91,460.66,792.34,460.59,794.76,460.72C797.19,460.85,799.62,463.52,802.05,464.47C804.48,465.43,806.91,465.13,809.34,466.45C811.76,467.76,814.19,554.87,816.62,554.87C819.05,554.87,821.48,554.87,823.90,554.87C826.33,554.87,828.76,469.01,831.19,463.09C833.62,457.17,836.05,454.21,838.48,454.21C840.90,454.21,843.33,459.21,845.76,460.53C848.19,461.84,850.62,461.74,853.04,462.50C855.47,463.26,857.90,464.34,860.33,465.07C862.76,465.79,865.19,466.84,867.62,466.84C870.04,466.84,872.47,466.84,874.90,466.84" fill="none" stroke="#84a7f4" stroke-width="1.6" stroke-linejoin="round" stroke-linecap="butt"/><line x1="961.10" y1="554.50" x2="1172.90" y2="554.50" stroke="#c0c0c0" stroke-width="0.75" stroke-dasharray="2 1.79"/><line x1="961.10" y1="530.88" x2="1172.90" y2="530.88" stroke="#c0c0c0" stroke-width="0.75" stroke-dasharray="2 1.79"/><line x1="961.10" y1="507.26" x2="1172.90" y2="507.26" stroke="#c0c0c0" stroke-width="0.75" stroke-dasharray="2 1.79"/><line x1="961.10" y1="483.64" x2="1172.90" y2="483.64" stroke="#c0c0c0" stroke-width="0.75" stroke-dasharray="2 1.79"/><line x1="961.10" y1="460.02" x2="1172.90" y2="460.02" stroke="#c0c0c0" stroke-width="0.75" stroke-dasharray="2 1.79"/><line x1="961.10" y1="436.40" x2="1172.90" y2="436.40" stroke="#c0c0c0" stroke-width="0.75" stroke-dasharray="2 1.79"/><line x1="961.10" y1="436.40" x2="1172.90" y2="436.40" stroke="#c0c0c0" stroke-width="0.75" stroke-dasharray="2 1.79"/><path d="M1027.20,554.47C1029.63,554.41,1032.06,554.34,1034.49,554.08C1036.91,553.81,1039.34,538.09,1041.77,521.31C1044.20,504.54,1046.63,453.42,1049.06,453.42C1051.48,453.42,1053.91,453.42,1056.34,453.42C1058.77,453.42,1061.20,451.05,1063.62,451.05C1066.05,451.05,1068.48,453.03,1070.91,453.03C1073.34,453.03,1075.77,452.83,1078.20,452.83C1080.62,452.83,1083.05,456.58,1085.48,456.58C1087.91,456.58,1090.34,452.04,1092.77,452.04C1095.19,452.04,1097.62,454.44,1100.05,455.20C1102.48,455.95,1104.91,455.66,1107.34,456.58C1109.76,457.50,1112.19,530.20,1114.62,530.20C1117.05,530.20,1119.48,467.70,1121.90,461.12C1124.33,454.54,1126.76,452.83,1129.19,451.25C1131.62,449.67,1134.05,448.88,1136.48,448.88C1138.90,448.88,1141.33,448.88,1143.76,448.88C1146.19,448.88,1148.62,451.05,1151.05,451.05C1153.47,451.05,1155.90,447.70,1158.33,447.70C1160.76,447.70,1163.19,447.89,1165.62,448.29C1168.04,448.68,1170.47,449.47,1172.90,450.26L1172.90,554.50L1027.20,554.50Z" fill="#93c062" fill-opacity="0.26" stroke="none"/><path d="M1027.20,554.47C1029.63,554.41,1032.06,554.34,1034.49,554.08C1036.91,553.81,1039.34,538.09,1041.77,521.31C1044.20,504.54,1046.63,453.42,1049.06,453.42C1051.48,453.42,1053.91,453.42,1056.34,453.42C1058.77,453.42,1061.20,451.05,1063.62,451.05C1066.05,451.05,1068.48,453.03,1070.91,453.03C1073.34,453.03,1075.77,452.83,1078.20,452.83C1080.62,452.83,1083.05,456.58,1085.48,456.58C1087.91,456.58,1090.34,452.04,1092.77,452.04C1095.19,452.04,1097.62,454.44,1100.05,455.20C1102.48,455.95,1104.91,455.66,1107.34,456.58C1109.76,457.50,1112.19,530.20,1114.62,530.20C1117.05,530.20,1119.48,467.70,1121.90,461.12C1124.33,454.54,1126.76,452.83,1129.19,451.25C1131.62,449.67,1134.05,448.88,1136.48,448.88C1138.90,448.88,1141.33,448.88,1143.76,448.88C1146.19,448.88,1148.62,451.05,1151.05,451.05C1153.47,451.05,1155.90,447.70,1158.33,447.70C1160.76,447.70,1163.19,447.89,1165.62,448.29C1168.04,448.68,1170.47,449.47,1172.90,450.26" fill="none" stroke="#96c267" stroke-width="1.6" stroke-linejoin="round" stroke-linecap="butt"/><line x1="1268.40" y1="436.40" x2="1469.30" y2="436.40" stroke="#c0c0c0" stroke-width="0.75" stroke-dasharray="2 1.79"/><line x1="1268.40" y1="440.00" x2="1469.30" y2="440.00" stroke="#c0c0c0" stroke-width="0.75" stroke-dasharray="2 1.79"/><line x1="1268.40" y1="458.28" x2="1469.30" y2="458.28" stroke="#c0c0c0" stroke-width="0.75" stroke-dasharray="2 1.79"/><line x1="1268.40" y1="476.55" x2="1469.30" y2="476.55" stroke="#c0c0c0" stroke-width="0.75" stroke-dasharray="2 1.79"/><line x1="1268.40" y1="494.82" x2="1469.30" y2="494.82" stroke="#c0c0c0" stroke-width="0.75" stroke-dasharray="2 1.79"/><line x1="1268.40" y1="513.09" x2="1469.30" y2="513.09" stroke="#c0c0c0" stroke-width="0.75" stroke-dasharray="2 1.79"/><line x1="1268.40" y1="531.36" x2="1469.30" y2="531.36" stroke="#c0c0c0" stroke-width="0.75" stroke-dasharray="2 1.79"/><line x1="1268.40" y1="540.50" x2="1469.30" y2="540.50" stroke="#c0c0c0" stroke-width="0.75" stroke-dasharray="2 1.79"/><path d="M1330.50,537.10C1332.81,536.84,1335.13,536.58,1337.44,535.53C1339.75,534.47,1342.07,511.68,1344.38,498.62C1346.69,485.56,1349.01,457.30,1351.32,457.17C1353.63,457.04,1355.95,457.10,1358.26,456.97C1360.57,456.84,1362.89,453.49,1365.20,452.24C1367.51,450.99,1369.83,449.47,1372.14,449.47C1374.45,449.47,1376.77,462.37,1379.08,466.05C1381.39,469.74,1383.71,470.79,1386.02,471.58C1388.33,472.37,1390.65,472.76,1392.96,472.76C1395.27,472.76,1397.59,472.37,1399.90,472.37C1402.21,472.37,1404.53,473.22,1406.84,474.93C1409.15,476.64,1411.47,498.03,1413.78,498.03C1416.09,498.03,1418.41,495.26,1420.72,489.74C1423.03,484.21,1425.35,457.57,1427.66,457.57C1429.97,457.57,1432.29,457.89,1434.60,458.55C1436.91,459.21,1439.23,467.63,1441.54,470.00C1443.85,472.37,1446.17,473.16,1448.48,473.55C1450.79,473.95,1453.11,474.14,1455.42,474.14C1457.73,474.14,1460.05,474.14,1462.36,474.14C1464.67,474.14,1466.99,474.64,1469.30,475.13L1469.30,540.50L1330.50,540.50Z" fill="#fcc425" fill-opacity="0.29" stroke="none"/><path d="M1330.50,537.10C1332.81,536.84,1335.13,536.58,1337.44,535.53C1339.75,534.47,1342.07,511.68,1344.38,498.62C1346.69,485.56,1349.01,457.30,1351.32,457.17C1353.63,457.04,1355.95,457.10,1358.26,456.97C1360.57,456.84,1362.89,453.49,1365.20,452.24C1367.51,450.99,1369.83,449.47,1372.14,449.47C1374.45,449.47,1376.77,462.37,1379.08,466.05C1381.39,469.74,1383.71,470.79,1386.02,471.58C1388.33,472.37,1390.65,472.76,1392.96,472.76C1395.27,472.76,1397.59,472.37,1399.90,472.37C1402.21,472.37,1404.53,473.22,1406.84,474.93C1409.15,476.64,1411.47,498.03,1413.78,498.03C1416.09,498.03,1418.41,495.26,1420.72,489.74C1423.03,484.21,1425.35,457.57,1427.66,457.57C1429.97,457.57,1432.29,457.89,1434.60,458.55C1436.91,459.21,1439.23,467.63,1441.54,470.00C1443.85,472.37,1446.17,473.16,1448.48,473.55C1450.79,473.95,1453.11,474.14,1455.42,474.14C1457.73,474.14,1460.05,474.14,1462.36,474.14C1464.67,474.14,1466.99,474.64,1469.30,475.13" fill="none" stroke="#fcc62b" stroke-width="1.6" stroke-linejoin="round" stroke-linecap="butt"/><path d="M1330.50,540.50C1332.81,540.50,1335.13,540.50,1337.44,540.50C1339.75,540.50,1342.07,540.50,1344.38,540.50C1346.69,540.50,1349.01,540.50,1351.32,540.50C1353.63,540.50,1355.95,540.50,1358.26,540.50C1360.57,540.50,1362.89,540.50,1365.20,540.50C1367.51,540.50,1369.83,540.50,1372.14,540.50C1374.45,540.50,1376.77,540.50,1379.08,540.50C1381.39,540.50,1383.71,540.50,1386.02,540.50C1388.33,540.50,1390.65,540.50,1392.96,540.50C1395.27,540.50,1397.59,540.50,1399.90,540.50C1402.21,540.50,1404.53,540.50,1406.84,540.50C1409.15,540.50,1411.47,540.50,1413.78,540.50C1416.09,540.50,1418.41,540.50,1420.72,540.50C1423.03,540.50,1425.35,540.50,1427.66,540.50C1429.97,540.50,1432.29,540.50,1434.60,540.50C1436.91,540.50,1439.23,540.50,1441.54,540.50C1443.85,540.50,1446.17,540.50,1448.48,540.50C1450.79,540.50,1453.11,540.50,1455.42,540.50C1457.73,540.50,1460.05,540.50,1462.36,540.50C1464.67,540.50,1466.99,540.50,1469.30,540.50" fill="none" stroke="#fba6a2" stroke-width="1.3" stroke-linejoin="round" stroke-linecap="butt"/><line x1="663.10" y1="752.40" x2="874.90" y2="752.40" stroke="#c0c0c0" stroke-width="0.75" stroke-dasharray="2 1.79"/><line x1="663.10" y1="728.78" x2="874.90" y2="728.78" stroke="#c0c0c0" stroke-width="0.75" stroke-dasharray="2 1.79"/><line x1="663.10" y1="705.16" x2="874.90" y2="705.16" stroke="#c0c0c0" stroke-width="0.75" stroke-dasharray="2 1.79"/><line x1="663.10" y1="681.54" x2="874.90" y2="681.54" stroke="#c0c0c0" stroke-width="0.75" stroke-dasharray="2 1.79"/><line x1="663.10" y1="657.92" x2="874.90" y2="657.92" stroke="#c0c0c0" stroke-width="0.75" stroke-dasharray="2 1.79"/><line x1="663.10" y1="634.30" x2="874.90" y2="634.30" stroke="#c0c0c0" stroke-width="0.75" stroke-dasharray="2 1.79"/><line x1="663.10" y1="634.30" x2="874.90" y2="634.30" stroke="#c0c0c0" stroke-width="0.75" stroke-dasharray="2 1.79"/><path d="M729.20,727.60C731.63,727.60,734.06,727.60,736.49,727.60C738.91,727.60,741.34,726.22,743.77,726.22C746.20,726.22,748.63,726.22,751.06,726.22C753.48,726.22,755.91,726.22,758.34,726.22C760.77,726.22,763.20,726.22,765.62,726.22C768.05,726.22,770.48,726.22,772.91,726.22C775.34,726.22,777.77,726.22,780.20,726.22C782.62,726.22,785.05,726.22,787.48,726.22C789.91,726.22,792.34,726.22,794.76,726.22C797.19,726.22,799.62,726.22,802.05,726.22C804.48,726.22,806.91,726.22,809.34,726.22C811.76,726.22,814.19,726.62,816.62,726.62C819.05,726.62,821.48,726.22,823.90,726.22C826.33,726.22,828.76,726.22,831.19,726.22C833.62,726.22,836.05,726.22,838.48,726.22C840.90,726.22,843.33,726.22,845.76,726.22C848.19,726.22,850.62,726.22,853.04,726.22C855.47,726.22,857.90,726.22,860.33,726.22C862.76,726.22,865.19,726.22,867.62,726.22C870.04,726.22,872.47,726.22,874.90,726.22L874.90,752.40L729.20,752.40Z" fill="#7fa3f3" fill-opacity="0.26" stroke="none"/><path d="M729.20,727.60C731.63,727.60,734.06,727.60,736.49,727.60C738.91,727.60,741.34,726.22,743.77,726.22C746.20,726.22,748.63,726.22,751.06,726.22C753.48,726.22,755.91,726.22,758.34,726.22C760.77,726.22,763.20,726.22,765.62,726.22C768.05,726.22,770.48,726.22,772.91,726.22C775.34,726.22,777.77,726.22,780.20,726.22C782.62,726.22,785.05,726.22,787.48,726.22C789.91,726.22,792.34,726.22,794.76,726.22C797.19,726.22,799.62,726.22,802.05,726.22C804.48,726.22,806.91,726.22,809.34,726.22C811.76,726.22,814.19,726.62,816.62,726.62C819.05,726.62,821.48,726.22,823.90,726.22C826.33,726.22,828.76,726.22,831.19,726.22C833.62,726.22,836.05,726.22,838.48,726.22C840.90,726.22,843.33,726.22,845.76,726.22C848.19,726.22,850.62,726.22,853.04,726.22C855.47,726.22,857.90,726.22,860.33,726.22C862.76,726.22,865.19,726.22,867.62,726.22C870.04,726.22,872.47,726.22,874.90,726.22" fill="none" stroke="#84a7f4" stroke-width="1.6" stroke-linejoin="round" stroke-linecap="butt"/><line x1="961.10" y1="752.40" x2="1172.90" y2="752.40" stroke="#c0c0c0" stroke-width="0.75" stroke-dasharray="2 1.79"/><line x1="961.10" y1="732.72" x2="1172.90" y2="732.72" stroke="#c0c0c0" stroke-width="0.75" stroke-dasharray="2 1.79"/><line x1="961.10" y1="713.03" x2="1172.90" y2="713.03" stroke="#c0c0c0" stroke-width="0.75" stroke-dasharray="2 1.79"/><line x1="961.10" y1="693.35" x2="1172.90" y2="693.35" stroke="#c0c0c0" stroke-width="0.75" stroke-dasharray="2 1.79"/><line x1="961.10" y1="673.67" x2="1172.90" y2="673.67" stroke="#c0c0c0" stroke-width="0.75" stroke-dasharray="2 1.79"/><line x1="961.10" y1="653.98" x2="1172.90" y2="653.98" stroke="#c0c0c0" stroke-width="0.75" stroke-dasharray="2 1.79"/><line x1="961.10" y1="634.30" x2="1172.90" y2="634.30" stroke="#c0c0c0" stroke-width="0.75" stroke-dasharray="2 1.79"/><line x1="961.10" y1="634.30" x2="1172.90" y2="634.30" stroke="#c0c0c0" stroke-width="0.75" stroke-dasharray="2 1.79"/><path d="M1027.20,707.47C1029.63,707.47,1032.06,707.47,1034.49,707.47C1036.91,707.47,1039.34,673.46,1041.77,667.01C1044.20,660.57,1046.63,657.34,1049.06,657.34C1051.48,657.34,1053.91,657.34,1056.34,657.34C1058.77,657.34,1061.20,649.64,1063.62,649.64C1066.05,649.64,1068.48,649.64,1070.91,649.64C1073.34,649.64,1075.77,649.64,1078.20,649.64C1080.62,649.64,1083.05,649.64,1085.48,649.64C1087.91,649.64,1090.34,650.63,1092.77,650.63C1095.19,650.63,1097.62,650.63,1100.05,650.63C1102.48,650.63,1104.91,649.64,1107.34,649.64C1109.76,649.64,1112.19,654.38,1114.62,654.38C1117.05,654.38,1119.48,654.38,1121.90,654.38C1124.33,654.38,1126.76,649.64,1129.19,649.64C1131.62,649.64,1134.05,649.64,1136.48,649.64C1138.90,649.64,1141.33,653.39,1143.76,653.39C1146.19,653.39,1148.62,653.39,1151.05,653.39C1153.47,653.39,1155.90,649.64,1158.33,649.64C1160.76,649.64,1163.19,649.64,1165.62,649.64C1168.04,649.64,1170.47,649.64,1172.90,649.64L1172.90,752.40L1027.20,752.40Z" fill="#93c062" fill-opacity="0.26" stroke="none"/><path d="M1027.20,707.47C1029.63,707.47,1032.06,707.47,1034.49,707.47C1036.91,707.47,1039.34,673.46,1041.77,667.01C1044.20,660.57,1046.63,657.34,1049.06,657.34C1051.48,657.34,1053.91,657.34,1056.34,657.34C1058.77,657.34,1061.20,649.64,1063.62,649.64C1066.05,649.64,1068.48,649.64,1070.91,649.64C1073.34,649.64,1075.77,649.64,1078.20,649.64C1080.62,649.64,1083.05,649.64,1085.48,649.64C1087.91,649.64,1090.34,650.63,1092.77,650.63C1095.19,650.63,1097.62,650.63,1100.05,650.63C1102.48,650.63,1104.91,649.64,1107.34,649.64C1109.76,649.64,1112.19,654.38,1114.62,654.38C1117.05,654.38,1119.48,654.38,1121.90,654.38C1124.33,654.38,1126.76,649.64,1129.19,649.64C1131.62,649.64,1134.05,649.64,1136.48,649.64C1138.90,649.64,1141.33,653.39,1143.76,653.39C1146.19,653.39,1148.62,653.39,1151.05,653.39C1153.47,653.39,1155.90,649.64,1158.33,649.64C1160.76,649.64,1163.19,649.64,1165.62,649.64C1168.04,649.64,1170.47,649.64,1172.90,649.64" fill="none" stroke="#96c267" stroke-width="1.6" stroke-linejoin="round" stroke-linecap="butt"/><line x1="1268.40" y1="752.40" x2="1469.30" y2="752.40" stroke="#c0c0c0" stroke-width="0.75" stroke-dasharray="2 1.79"/><line x1="1268.40" y1="728.78" x2="1469.30" y2="728.78" stroke="#c0c0c0" stroke-width="0.75" stroke-dasharray="2 1.79"/><line x1="1268.40" y1="705.16" x2="1469.30" y2="705.16" stroke="#c0c0c0" stroke-width="0.75" stroke-dasharray="2 1.79"/><line x1="1268.40" y1="681.54" x2="1469.30" y2="681.54" stroke="#c0c0c0" stroke-width="0.75" stroke-dasharray="2 1.79"/><line x1="1268.40" y1="657.92" x2="1469.30" y2="657.92" stroke="#c0c0c0" stroke-width="0.75" stroke-dasharray="2 1.79"/><line x1="1268.40" y1="634.30" x2="1469.30" y2="634.30" stroke="#c0c0c0" stroke-width="0.75" stroke-dasharray="2 1.79"/><line x1="1268.40" y1="634.30" x2="1469.30" y2="634.30" stroke="#c0c0c0" stroke-width="0.75" stroke-dasharray="2 1.79"/><path d="M1330.50,752.40C1332.81,752.40,1335.13,752.40,1337.44,752.40C1339.75,752.40,1342.07,752.40,1344.38,752.40C1346.69,752.40,1349.01,752.40,1351.32,752.40C1353.63,752.40,1355.95,752.40,1358.26,752.40C1360.57,752.40,1362.89,752.40,1365.20,752.40C1367.51,752.40,1369.83,752.40,1372.14,752.40C1374.45,752.40,1376.77,752.40,1379.08,752.40C1381.39,752.40,1383.71,752.40,1386.02,752.40C1388.33,752.40,1390.65,752.40,1392.96,752.40C1395.27,752.40,1397.59,752.40,1399.90,752.40C1402.21,752.40,1404.53,752.40,1406.84,752.40C1409.15,752.40,1411.47,752.40,1413.78,752.40C1416.09,752.40,1418.41,752.40,1420.72,752.40C1423.03,752.40,1425.35,752.40,1427.66,752.40C1429.97,752.40,1432.29,752.40,1434.60,752.40C1436.91,752.40,1439.23,752.40,1441.54,752.40C1443.85,752.40,1446.17,752.40,1448.48,752.40C1450.79,752.40,1453.11,752.40,1455.42,752.40C1457.73,752.40,1460.05,752.40,1462.36,752.40C1464.67,752.40,1466.99,752.40,1469.30,752.40" fill="none" stroke="#fcc425" stroke-width="1.5" stroke-linejoin="round" stroke-linecap="butt"/><line x1="961.10" y1="951.30" x2="1172.90" y2="951.30" stroke="#c0c0c0" stroke-width="0.75" stroke-dasharray="2 1.79"/><line x1="961.10" y1="924.85" x2="1172.90" y2="924.85" stroke="#c0c0c0" stroke-width="0.75" stroke-dasharray="2 1.79"/><line x1="961.10" y1="898.40" x2="1172.90" y2="898.40" stroke="#c0c0c0" stroke-width="0.75" stroke-dasharray="2 1.79"/><line x1="961.10" y1="871.95" x2="1172.90" y2="871.95" stroke="#c0c0c0" stroke-width="0.75" stroke-dasharray="2 1.79"/><line x1="961.10" y1="845.50" x2="1172.90" y2="845.50" stroke="#c0c0c0" stroke-width="0.75" stroke-dasharray="2 1.79"/><line x1="961.10" y1="833.20" x2="1172.90" y2="833.20" stroke="#c0c0c0" stroke-width="0.75" stroke-dasharray="2 1.79"/><path d="M1027.20,883.79C1029.63,883.79,1032.06,883.79,1034.49,883.79C1036.91,883.79,1039.34,860.37,1041.77,857.74C1044.20,855.10,1046.63,855.30,1049.06,853.79C1051.48,852.28,1053.91,848.66,1056.34,848.66C1058.77,848.66,1061.20,849.38,1063.62,850.83C1066.05,852.28,1068.48,862.74,1070.91,864.45C1073.34,866.16,1075.77,867.01,1078.20,867.01C1080.62,867.01,1083.05,864.64,1085.48,864.64C1087.91,864.64,1090.34,865.57,1092.77,865.83C1095.19,866.09,1097.62,865.96,1100.05,866.22C1102.48,866.49,1104.91,867.14,1107.34,868.99C1109.76,870.83,1112.19,888.33,1114.62,888.33C1117.05,888.33,1119.48,851.22,1121.90,851.22C1124.33,851.22,1126.76,853.20,1129.19,855.17C1131.62,857.14,1134.05,860.99,1136.48,863.07C1138.90,865.14,1141.33,867.60,1143.76,867.60C1146.19,867.60,1148.62,865.63,1151.05,865.63C1153.47,865.63,1155.90,868.39,1158.33,868.39C1160.76,868.39,1163.19,865.24,1165.62,865.24C1168.04,865.24,1170.47,865.73,1172.90,866.22L1172.90,951.30L1027.20,951.30Z" fill="#93c062" fill-opacity="0.26" stroke="none"/><path d="M1027.20,883.79C1029.63,883.79,1032.06,883.79,1034.49,883.79C1036.91,883.79,1039.34,860.37,1041.77,857.74C1044.20,855.10,1046.63,855.30,1049.06,853.79C1051.48,852.28,1053.91,848.66,1056.34,848.66C1058.77,848.66,1061.20,849.38,1063.62,850.83C1066.05,852.28,1068.48,862.74,1070.91,864.45C1073.34,866.16,1075.77,867.01,1078.20,867.01C1080.62,867.01,1083.05,864.64,1085.48,864.64C1087.91,864.64,1090.34,865.57,1092.77,865.83C1095.19,866.09,1097.62,865.96,1100.05,866.22C1102.48,866.49,1104.91,867.14,1107.34,868.99C1109.76,870.83,1112.19,888.33,1114.62,888.33C1117.05,888.33,1119.48,851.22,1121.90,851.22C1124.33,851.22,1126.76,853.20,1129.19,855.17C1131.62,857.14,1134.05,860.99,1136.48,863.07C1138.90,865.14,1141.33,867.60,1143.76,867.60C1146.19,867.60,1148.62,865.63,1151.05,865.63C1153.47,865.63,1155.90,868.39,1158.33,868.39C1160.76,868.39,1163.19,865.24,1165.62,865.24C1168.04,865.24,1170.47,865.73,1172.90,866.22" fill="none" stroke="#96c267" stroke-width="1.6" stroke-linejoin="round" stroke-linecap="butt"/><line x1="1268.40" y1="937.30" x2="1469.30" y2="937.30" stroke="#c0c0c0" stroke-width="0.75" stroke-dasharray="2 1.79"/><line x1="1268.40" y1="926.88" x2="1469.30" y2="926.88" stroke="#c0c0c0" stroke-width="0.75" stroke-dasharray="2 1.79"/><line x1="1268.40" y1="906.04" x2="1469.30" y2="906.04" stroke="#c0c0c0" stroke-width="0.75" stroke-dasharray="2 1.79"/><line x1="1268.40" y1="885.20" x2="1469.30" y2="885.20" stroke="#c0c0c0" stroke-width="0.75" stroke-dasharray="2 1.79"/><line x1="1268.40" y1="864.36" x2="1469.30" y2="864.36" stroke="#c0c0c0" stroke-width="0.75" stroke-dasharray="2 1.79"/><line x1="1268.40" y1="833.10" x2="1469.30" y2="833.10" stroke="#c0c0c0" stroke-width="0.75" stroke-dasharray="2 1.79"/><line x1="1268.40" y1="833.10" x2="1469.30" y2="833.10" stroke="#c0c0c0" stroke-width="0.75" stroke-dasharray="2 1.79"/><path d="M1330.50,937.30C1332.81,937.30,1335.13,937.30,1337.44,937.30C1339.75,937.30,1342.07,937.30,1344.38,937.30C1346.69,937.30,1349.01,937.30,1351.32,937.30C1353.63,937.30,1355.95,937.30,1358.26,937.30C1360.57,937.30,1362.89,937.30,1365.20,937.30C1367.51,937.30,1369.83,937.30,1372.14,937.30C1374.45,937.30,1376.77,937.30,1379.08,937.30C1381.39,937.30,1383.71,937.30,1386.02,937.30C1388.33,937.30,1390.65,937.30,1392.96,937.30C1395.27,937.30,1397.59,937.30,1399.90,937.30C1402.21,937.30,1404.53,937.30,1406.84,937.30C1409.15,937.30,1411.47,937.30,1413.78,937.30C1416.09,937.30,1418.41,937.30,1420.72,937.30C1423.03,937.30,1425.35,937.30,1427.66,937.30C1429.97,937.30,1432.29,937.30,1434.60,937.30C1436.91,937.30,1439.23,937.30,1441.54,937.30C1443.85,937.30,1446.17,937.30,1448.48,937.30C1450.79,937.30,1453.11,937.30,1455.42,937.30C1457.73,937.30,1460.05,937.30,1462.36,937.30C1464.67,937.30,1466.99,937.30,1469.30,937.30" fill="none" stroke="#e6a3bb" stroke-width="2.4" stroke-linejoin="round" stroke-linecap="butt"/><path d="M1330.50,937.30C1332.81,937.30,1335.13,937.30,1337.44,937.30C1339.75,937.30,1342.07,937.30,1344.38,937.30C1346.69,937.30,1349.01,937.30,1351.32,937.30C1353.63,937.30,1355.95,937.30,1358.26,937.30C1360.57,937.30,1362.89,937.30,1365.20,937.30C1367.51,937.30,1369.83,937.30,1372.14,937.30C1374.45,937.30,1376.77,937.30,1379.08,937.30C1381.39,937.30,1383.71,937.30,1386.02,937.30C1388.33,937.30,1390.65,937.30,1392.96,937.30C1395.27,937.30,1397.59,937.30,1399.90,937.30C1402.21,937.30,1404.53,937.30,1406.84,937.30C1409.15,937.30,1411.47,937.30,1413.78,937.30C1416.09,937.30,1418.41,937.30,1420.72,937.30C1423.03,937.30,1425.35,937.30,1427.66,937.30C1429.97,937.30,1432.29,937.30,1434.60,937.30C1436.91,937.30,1439.23,937.30,1441.54,937.30C1443.85,937.30,1446.17,937.30,1448.48,937.30C1450.79,937.30,1453.11,937.30,1455.42,937.30C1457.73,937.30,1460.05,937.30,1462.36,937.30C1464.67,937.30,1466.99,937.30,1469.30,937.30" fill="none" stroke="#633a80" stroke-width="1.7" stroke-linejoin="round" stroke-linecap="butt"/></svg>
</body></html>
